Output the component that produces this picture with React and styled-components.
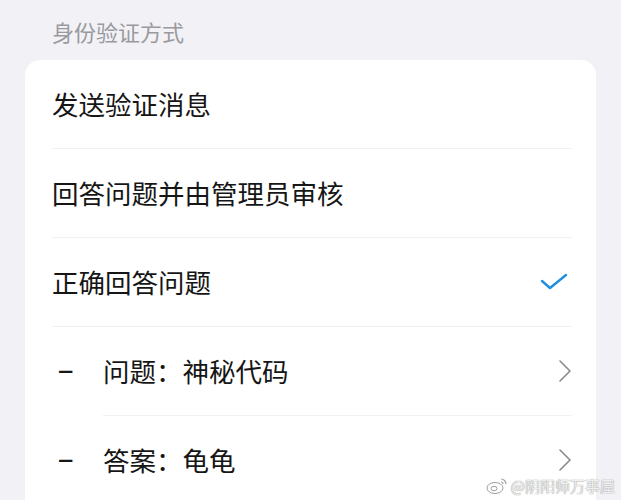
import React from 'react';
import styled, { createGlobalStyle } from 'styled-components';

const GlobalStyle = createGlobalStyle`
    html, body {
        margin: 0;
        padding: 0;
        background: #f1f1f6;
        font-family: "Noto Sans CJK SC", "Noto Sans", sans-serif;
    }
`;

const Page = styled.div`
    width: 621px;
    height: 500px;
    overflow: hidden;
    position: relative;
    background: #f1f1f6;
`;

const SectionTitle = styled.div`
    padding: 16px 0 0 52px;
    height: 42px;
    box-sizing: border-box;
    font-size: 22px;
    line-height: 30px;
    color: #9a9a9e;
`;

const Card = styled.div`
    margin: 18px 25px 0 25px;
    background: #fff;
    border-radius: 15px;
    padding: 0 24px 30px 27px;
`;

const Row = styled.div`
    display: flex;
    align-items: center;
    height: 88px;
    border-bottom: ${(p) => (p.last ? 'none' : '1px solid #f1f1f3')};
    margin-left: ${(p) => (p.sub ? '51px' : '0')};
`;

const Label = styled.div`
    flex: 1;
    font-size: 26.5px;
    line-height: 36px;
    color: #161616;
    white-space: nowrap;
`;

const Dash = styled.span`
    width: 51px;
    margin-left: -51px;
    padding-left: 6px;
    box-sizing: border-box;
    font-size: 27px;
    line-height: 36px;
    font-weight: 500;
    color: #161616;
`;

const Check = styled.svg`
    width: 30px;
    height: 22px;
    margin-right: 3px;
`;

const Chevron = styled.svg`
    width: 14px;
    height: 24px;
`;

const Watermark = styled.div`
    position: absolute;
    right: 6px;
    bottom: 4px;
    display: flex;
    align-items: center;
    gap: 3px;
    font-size: 15px;
    color: rgba(255, 255, 255, 0.85);
    text-shadow: 0 0 1px #9a9a9a, 0 0 1px #9a9a9a;
`;

const options = [
    { label: '发送验证消息' },
    { label: '回答问题并由管理员审核' },
    { label: '正确回答问题', checked: true },
    { label: '问题：神秘代码', sub: true, arrow: true },
    { label: '答案：龟龟', sub: true, arrow: true, last: true },
];

function CheckIcon() {
    return (
        <Check viewBox="0 0 30 22">
            <polyline points="3,10 11,17 27,4" fill="none" stroke="#1e8fe0" strokeWidth="2.4" strokeLinecap="round" strokeLinejoin="round" />
        </Check>
    );
}

function ArrowIcon() {
    return (
        <Chevron viewBox="0 0 14 24">
            <polyline points="2,2 12,12 2,22" fill="none" stroke="#8a8a8a" strokeWidth="1.6" strokeLinecap="round" strokeLinejoin="round" />
        </Chevron>
    );
}

function WeiboLogo() {
    return (
        <svg width="22" height="18" viewBox="0 0 22 18">
            <ellipse cx="9" cy="11" rx="8" ry="5.5" fill="rgba(255,255,255,0.85)" stroke="#a0a0a0" strokeWidth="1" />
            <ellipse cx="8" cy="11.5" rx="3" ry="2.2" fill="none" stroke="#a0a0a0" strokeWidth="1" />
            <path d="M15 2 a5 5 0 0 1 5 5" fill="none" stroke="#a0a0a0" strokeWidth="1.2" />
            <path d="M15 5 a2 2 0 0 1 2 2" fill="none" stroke="#a0a0a0" strokeWidth="1.2" />
        </svg>
    );
}

export default function App() {
    return (
        <Page>
            <GlobalStyle />
            <SectionTitle>身份验证方式</SectionTitle>
            <Card>
                {options.map((o) => (
                    <Row key={o.label} sub={o.sub} last={o.last}>
                        {o.sub && <Dash>−</Dash>}
                        <Label>{o.label}</Label>
                        {o.checked && <CheckIcon />}
                        {o.arrow && <ArrowIcon />}
                    </Row>
                ))}
            </Card>
            <Watermark>
                <WeiboLogo />
                <span>@阴阳师万事屋</span>
            </Watermark>
        </Page>
    );
}
